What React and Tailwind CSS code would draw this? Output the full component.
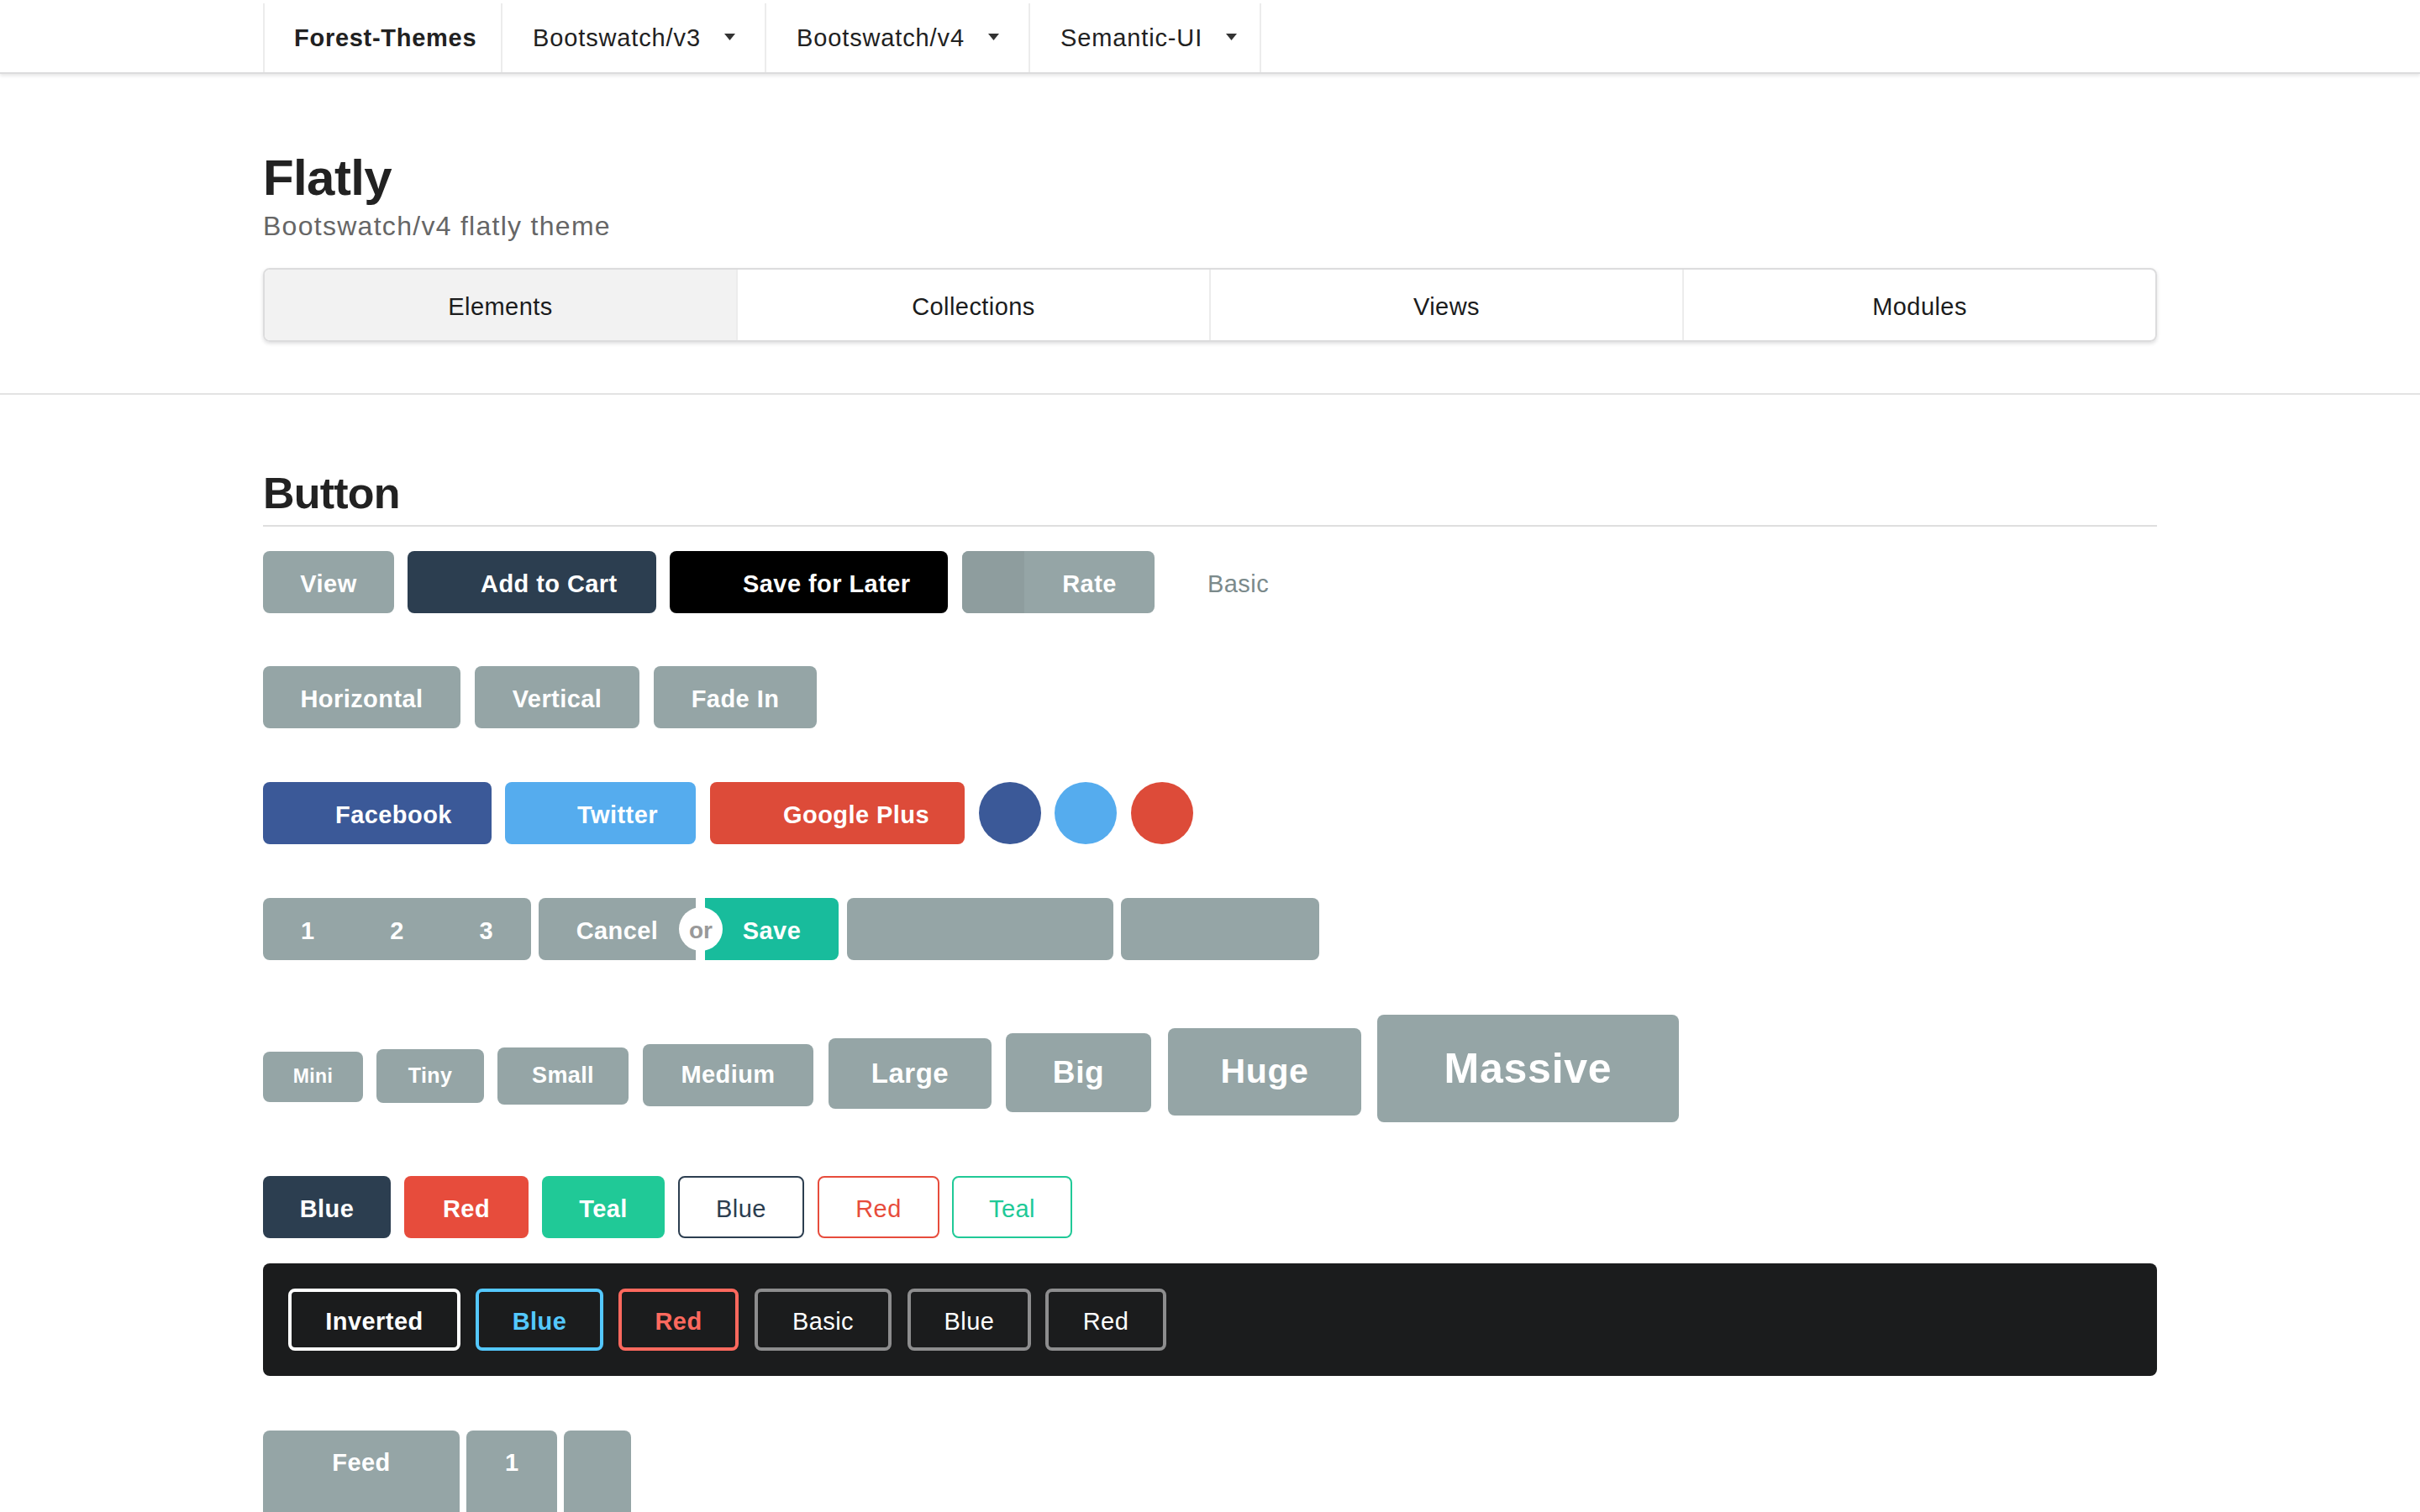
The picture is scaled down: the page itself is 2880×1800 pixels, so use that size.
import React from 'react'

const btn = 'flex h-[74px] shrink-0 items-center rounded-[8px] pt-[4px] text-[29px] font-bold leading-none tracking-[0.015em] text-white'
const outline = 'flex h-[74px] shrink-0 items-center justify-center rounded-[8px] pt-[4px] text-[29px] leading-none tracking-[0.015em]'

function Caret() {
  return (
    <svg className="mb-[3px] ml-[28px]" width="13" height="8" viewBox="0 0 13 8">
      <path d="M0 0 H13 L6.5 8 Z" fill="#333" />
    </svg>
  )
}

const sizes = [
  { label: 'Mini', cls: 'w-[119px] py-[18.5px] text-[23px]' },
  { label: 'Tiny', cls: 'ml-[16px] w-[128px] py-[19.5px] text-[25px]' },
  { label: 'Small', cls: 'ml-[16px] w-[156px] py-[20.5px] text-[27px]' },
  { label: 'Medium', cls: 'ml-[17px] w-[203px] py-[22.5px] text-[29px]' },
  { label: 'Large', cls: 'ml-[18px] w-[194px] py-[25.5px] text-[33px]' },
  { label: 'Big', cls: 'ml-[17px] w-[173px] py-[28.5px] text-[37px]' },
  { label: 'Huge', cls: 'ml-[20px] w-[230px] py-[31.5px] text-[41px]' },
  { label: 'Massive', cls: 'ml-[19px] w-[359px] py-[39px] text-[50px]' },
]

const tabs = ['Elements', 'Collections', 'Views', 'Modules']

export default function App() {
  return (
    <div className="h-[1800px] overflow-hidden bg-white font-['Liberation_Sans',Arial,sans-serif] text-[#212121]">
      <nav className="h-[88px] border-b-2 border-[#dcdcdd] bg-white shadow-[0_2px_4px_rgba(34,36,38,0.12)]">
        <div className="mx-auto flex h-full w-[2254px] pt-[4px] text-[29px] leading-none">
          <div className="flex w-[285px] items-center border-x-2 border-[#ececec] pl-[35px] font-bold tracking-[0.025em]">Forest-Themes</div>
          <div className="flex w-[314px] items-center border-r-2 border-[#ececec] pl-[36px] tracking-[0.03em]">
            Bootswatch/v3
            <Caret />
          </div>
          <div className="flex w-[314px] items-center border-r-2 border-[#ececec] pl-[36px] tracking-[0.03em]">
            Bootswatch/v4
            <Caret />
          </div>
          <div className="flex w-[275px] items-center border-r-2 border-[#ececec] pl-[36px] tracking-[0.03em]">
            Semantic-UI
            <Caret />
          </div>
        </div>
      </nav>

      <header className="border-b-2 border-[#e3e3e3] pb-[61px]">
        <div className="mx-auto w-[2254px] pt-[94px]">
          <h1 className="text-[60px] font-bold leading-[60px] tracking-[-0.01em] text-[#222]">Flatly</h1>
          <p className="mt-[11px] text-[32px] leading-[32px] tracking-[0.04em] text-[#666]">Bootswatch/v4 flatly theme</p>
          <div className="mt-[34px] flex h-[88px] overflow-hidden rounded-[8px] border-2 border-[#dcdcdd] shadow-[0_2px_4px_rgba(34,36,38,0.15)]">
            {tabs.map((t, i) => (
              <div
                key={t}
                className={
                  i === 0
                    ? 'flex flex-1 items-center justify-center bg-[#f2f2f2] pt-[4px] text-[29px] leading-none tracking-[0.015em] text-[#1b1c1d]'
                    : 'flex flex-1 items-center justify-center border-l-2 border-[#ececec] pt-[4px] text-[29px] leading-none tracking-[0.015em] text-[#1b1c1d]'
                }
              >
                {t}
              </div>
            ))}
          </div>
        </div>
      </header>

      <main className="mx-auto w-[2254px] pt-[91px]">
        <h2 className="border-b-2 border-[#dedede] pb-[12px] text-[52px] font-bold leading-[52px] tracking-[-0.015em] text-[#222]">Button</h2>

        {/* row 1 */}
        <div className="mt-[29px] flex h-[74px]">
          <div className={`${btn} w-[156px] justify-center bg-[#95a5a6]`}>View</div>
          <div className={`${btn} ml-[16px] w-[296px] bg-[#2c3e50] pl-[87px]`}>Add to Cart</div>
          <div className={`${btn} ml-[16px] w-[331px] bg-black pl-[87px]`}>Save for Later</div>
          <div className="ml-[17px] flex h-[74px] w-[229px] shrink-0 overflow-hidden rounded-[8px] bg-[#95a5a6] text-[29px] font-bold leading-none tracking-[0.015em] text-white">
            <div className="h-full w-[74px] bg-[#8e9d9e]" />
            <div className="flex flex-1 items-center justify-center pt-[4px]">Rate</div>
          </div>
          <div className="ml-[16px] flex h-[74px] items-center pl-[47px] pt-[4px] text-[29px] leading-none tracking-[0.015em] text-[#7b8a8b]">Basic</div>
        </div>

        {/* row 2 */}
        <div className="mt-[63px] flex h-[74px]">
          <div className={`${btn} w-[235px] justify-center bg-[#95a5a6]`}>Horizontal</div>
          <div className={`${btn} ml-[17px] w-[196px] justify-center bg-[#95a5a6]`}>Vertical</div>
          <div className={`${btn} ml-[17px] w-[194px] justify-center bg-[#95a5a6]`}>Fade In</div>
        </div>

        {/* row 3 */}
        <div className="mt-[64px] flex h-[74px]">
          <div className={`${btn} w-[272px] bg-[#3b5998] pl-[86px]`}>Facebook</div>
          <div className={`${btn} ml-[16px] w-[227px] bg-[#55acee] pl-[86px]`}>Twitter</div>
          <div className={`${btn} ml-[17px] w-[303px] bg-[#dd4b39] pl-[87px]`}>Google Plus</div>
          <div className="ml-[17px] h-[74px] w-[74px] rounded-full bg-[#3b5998]" />
          <div className="ml-[16px] h-[74px] w-[74px] rounded-full bg-[#55acee]" />
          <div className="ml-[17px] h-[74px] w-[74px] rounded-full bg-[#dd4b39]" />
        </div>

        {/* row 4 */}
        <div className="mt-[64px] flex h-[74px]">
          <div className={`${btn} w-[319px] bg-[#95a5a6]`}>
            <div className="flex flex-1 justify-center">1</div>
            <div className="flex flex-1 justify-center">2</div>
            <div className="flex flex-1 justify-center">3</div>
          </div>
          <div className="relative ml-[9px] flex">
            <div className={`${btn} w-[187px] justify-center rounded-r-none bg-[#95a5a6]`}>Cancel</div>
            <div className={`${btn} ml-[11px] w-[159px] justify-center rounded-l-none bg-[#18bc9c]`}>Save</div>
            <div className="absolute left-[167px] top-[11px] flex h-[52px] w-[52px] items-center justify-center rounded-full bg-white pt-[4px] text-[28px] font-bold leading-none text-[#999]">
              or
            </div>
          </div>
          <div className={`${btn} ml-[10px] w-[317px] bg-[#95a5a6]`} />
          <div className={`${btn} ml-[9px] w-[236px] bg-[#95a5a6]`} />
        </div>

        {/* row 5 sizes */}
        <div className="mt-[65px] flex items-baseline">
          {sizes.map((s) => (
            <div key={s.label} className={`block shrink-0 rounded-[8px] bg-[#95a5a6] text-center font-bold leading-none tracking-[0.015em] text-white ${s.cls}`}>
              {s.label}
            </div>
          ))}
        </div>

        {/* row 6 colours */}
        <div className="mt-[64px] flex h-[74px]">
          <div className={`${btn} w-[152px] justify-center bg-[#2c3e50]`}>Blue</div>
          <div className={`${btn} ml-[16px] w-[148px] justify-center bg-[#e74c3c]`}>Red</div>
          <div className={`${btn} ml-[16px] w-[146px] justify-center bg-[#20c997]`}>Teal</div>
          <div className={`${outline} ml-[16px] w-[150px] border-2 border-[#2c3e50] text-[#2c3e50]`}>Blue</div>
          <div className={`${outline} ml-[16px] w-[145px] border-2 border-[#e74c3c] text-[#e74c3c]`}>Red</div>
          <div className={`${outline} ml-[15px] w-[143px] border-2 border-[#20c997] text-[#20c997]`}>Teal</div>
        </div>

        {/* inverted segment */}
        <div className="mt-[30px] flex rounded-[8px] bg-[#1b1c1d] p-[30px]">
          <div className={`${outline} w-[205px] border-4 border-white font-bold text-white`}>Inverted</div>
          <div className={`${outline} ml-[18px] w-[152px] border-4 border-[#54c8ff] font-bold text-[#54c8ff]`}>Blue</div>
          <div className={`${outline} ml-[18px] w-[143px] border-4 border-[#ff695e] font-bold text-[#ff695e]`}>Red</div>
          <div className={`${outline} ml-[19px] w-[163px] border-4 border-[#8d8d8e] text-white`}>Basic</div>
          <div className={`${outline} ml-[19px] w-[147px] border-4 border-[#8d8d8e] text-white`}>Blue</div>
          <div className={`${outline} ml-[17px] w-[144px] border-4 border-[#8d8d8e] text-white`}>Red</div>
        </div>

        {/* row 8 */}
        <div className="mt-[65px] flex">
          <div className="h-[140px] w-[234px] rounded-t-[8px] bg-[#95a5a6] pt-[24px] text-center text-[29px] font-bold leading-[28px] tracking-[0.015em] text-white">Feed</div>
          <div className="ml-[8px] h-[140px] w-[108px] rounded-t-[8px] bg-[#95a5a6] pt-[24px] text-center text-[29px] font-bold leading-[28px] text-white">1</div>
          <div className="ml-[8px] h-[140px] w-[80px] rounded-t-[8px] bg-[#95a5a6]" />
        </div>
      </main>
    </div>
  )
}
